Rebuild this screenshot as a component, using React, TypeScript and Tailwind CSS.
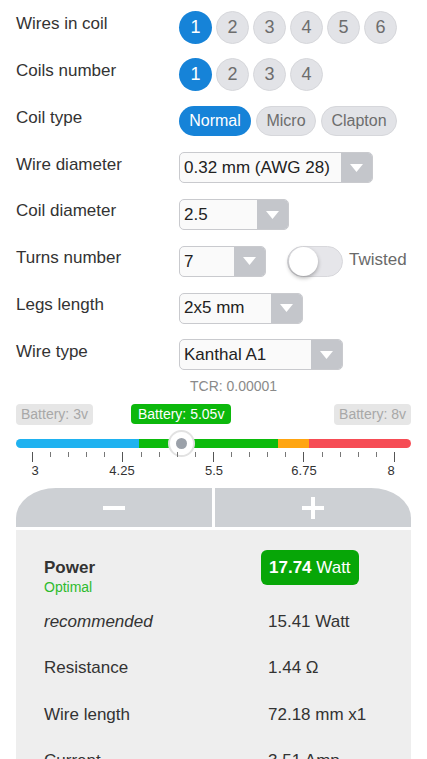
import { useState } from 'react';

const font = { fontFamily: '"Liberation Sans", Arial, sans-serif' };

function Row({ label, children }: { label: string; children: React.ReactNode }) {
    return (
        <div className="flex h-[46.8px] items-center">
            <div className="w-[179px] shrink-0 pb-[7px] pl-4 text-[17px] text-[#333]">{label}</div>
            <div className="flex items-center">{children}</div>
        </div>
    );
}

function Circles({ count, active }: { count: number; active: number }) {
    return (
        <div className="flex gap-1">
            {Array.from({ length: count }, (_, i) => i + 1).map((n) => (
                <div
                    key={n}
                    className={
                        n === active
                            ? 'flex h-[33px] w-[33px] items-center justify-center rounded-full bg-[#1683d8] text-[18px] text-white'
                            : 'flex h-[33px] w-[33px] items-center justify-center rounded-full border border-[#d6d7db] bg-[#e2e3e7] text-[18px] text-[#6d6d6d]'
                    }
                >
                    {n}
                </div>
            ))}
        </div>
    );
}

function Select({ value, width }: { value: string; width: number }) {
    return (
        <div
            className="flex h-[31px] overflow-hidden rounded-[5px] border border-[#c9cace] bg-[#fafafa]"
            style={{ width }}
        >
            <div className="flex flex-1 items-center pl-[4px] text-[17px] text-[#222]">{value}</div>
            <div className="flex w-[31px] items-center justify-center bg-[#c4c6cb]">
                <svg width="13" height="8" viewBox="0 0 13 8">
                    <path d="M0 0 H13 L6.5 8 Z" fill="#fff" />
                </svg>
            </div>
        </div>
    );
}

export default function App() {
    const [twisted] = useState(false);
    const ticks = Array.from({ length: 21 }, (_, i) => i);

    return (
        <div className="min-h-screen overflow-hidden bg-white" style={font}>
            <div className="pt-1">
                <Row label="Wires in coil">
                    <Circles count={6} active={1} />
                </Row>
                <Row label="Coils number">
                    <Circles count={4} active={1} />
                </Row>
                <Row label="Coil type">
                    <div className="flex gap-[5px] text-[16px]">
                        <div className="flex h-[30px] w-[72px] items-center justify-center rounded-full bg-[#1683d8] text-white">Normal</div>
                        <div className="flex h-[30px] w-[60px] items-center justify-center rounded-full border border-[#d6d7db] bg-[#e2e3e7] text-[#6d6d6d]">Micro</div>
                        <div className="flex h-[30px] w-[76px] items-center justify-center rounded-full border border-[#d6d7db] bg-[#e2e3e7] text-[#6d6d6d]">Clapton</div>
                    </div>
                </Row>
                <Row label="Wire diameter">
                    <Select value="0.32 mm (AWG 28)" width={194} />
                </Row>
                <Row label="Coil diameter">
                    <Select value="2.5" width={110} />
                </Row>
                <Row label="Turns number">
                    <Select value="7" width={87} />
                    <div className="ml-[21px] flex h-[31px] w-[56px] items-center rounded-full border border-[#d8d8dc] bg-[#e6e6ea] px-[1px]">
                        <div
                            className={
                                twisted
                                    ? 'ml-auto h-[29px] w-[29px] rounded-full bg-white'
                                    : 'h-[29px] w-[29px] rounded-full bg-white shadow-[0_2px_4px_rgba(0,0,0,0.3)]'
                            }
                        />
                    </div>
                    <span className="ml-[6px] pb-[4px] text-[17px] text-[#6a6a6a]">Twisted</span>
                </Row>
                <Row label="Legs length">
                    <Select value="2x5 mm" width={124} />
                </Row>
                <Row label="Wire type">
                    <Select value="Kanthal A1" width={164} />
                </Row>
            </div>

            <div className="-mt-[2px] pl-[190px] text-[14px] text-[#8a8a8a]">TCR: 0.00001</div>

            {/* battery range */}
            <div className="relative mx-4 mt-[7px] h-[22px]">
                <div className="absolute left-0 top-0 flex h-[21px] items-center rounded-[4px] bg-[#e6e6e6] px-[5px] text-[14px] text-[#a8a8a8]">Battery: 3v</div>
                <div className="absolute left-[115px] top-0 flex h-[20px] items-center rounded-[4px] bg-[#0cb80c] px-[7px] text-[14px] text-white">Battery: 5.05v</div>
                <div className="absolute right-0 top-0 flex h-[21px] items-center rounded-[4px] bg-[#e6e6e6] px-[5px] text-[14px] text-[#a8a8a8]">Battery: 8v</div>
            </div>

            <div className="relative mx-4 mt-[13px] h-[9px]">
                <div className="flex h-[9px] overflow-hidden rounded-full">
                    <div className="w-[123px] bg-[#1fb2f0]" />
                    <div className="w-[139px] bg-[#0cbb0c]" />
                    <div className="w-[31px] bg-[#ffa511]" />
                    <div className="flex-1 bg-[#f64c55]" />
                </div>
                <div className="absolute left-[152px] top-[-9px] flex h-[27px] w-[27px] items-center justify-center rounded-full border-2 border-[#e2e2e2] bg-white">
                    <div className="h-[11px] w-[11px] rounded-full bg-[#9ba1a9]" />
                </div>
            </div>

            <div className="relative mx-4 mt-[4px] h-[26px]">
                <div className="flex justify-between px-[16px]">
                    {ticks.map((t) => (
                        <div key={t} className={t % 5 === 0 ? 'h-[10px] w-px bg-[#555]' : 'h-[5px] w-px bg-[#777]'} />
                    ))}
                </div>
                <div className="absolute left-[7px] top-[9px] w-[24px] text-center text-[13px] text-[#333]">3</div>
                <div className="absolute left-[88px] top-[9px] w-[36px] text-center text-[13px] text-[#333]">4.25</div>
                <div className="absolute left-[180px] top-[9px] w-[36px] text-center text-[13px] text-[#333]">5.5</div>
                <div className="absolute left-[270px] top-[9px] w-[36px] text-center text-[13px] text-[#333]">6.75</div>
                <div className="absolute left-[363px] top-[9px] w-[24px] text-center text-[13px] text-[#333]">8</div>
            </div>

            {/* +/- buttons */}
            <div className="mx-4 mt-[10px] flex h-[39px] gap-[3px]">
                <div className="flex flex-1 items-center justify-center rounded-tl-[40px_30px] bg-[#cdd0d4]">
                    <div className="h-[4px] w-[22px] bg-white" />
                </div>
                <div className="flex flex-1 items-center justify-center rounded-tr-[40px_30px] bg-[#cdd0d4]">
                    <div className="relative h-[22px] w-[22px]">
                        <div className="absolute left-0 top-[9px] h-[4px] w-[22px] bg-white" />
                        <div className="absolute left-[9px] top-0 h-[22px] w-[4px] bg-white" />
                    </div>
                </div>
            </div>

            {/* results */}
            <div className="mx-4 mt-[3px] bg-[#eeeeee] pl-[28px] pt-[20px] pb-6 text-[17px] text-[#333]">
                <div className="flex">
                    <div className="w-[224px] pt-[8px]">
                        <div className="h-[20px] font-bold leading-[20px]">Power</div>
                        <div className="h-[18px] text-[14px] leading-[18px] text-[#2dbb2d]">Optimal</div>
                    </div>
                    <div className="-ml-[7px] flex h-[35px] items-center rounded-[6px] bg-[#07a607] px-[8px] text-white">
                        <span className="font-bold">17.74</span>&nbsp;Watt
                    </div>
                </div>
                <div className="mt-[2px] flex h-[46.5px] items-center">
                    <div className="w-[224px] italic">recommended</div>
                    <div>15.41 Watt</div>
                </div>
                <div className="flex h-[46.5px] items-center">
                    <div className="w-[224px]">Resistance</div>
                    <div>1.44 Ω</div>
                </div>
                <div className="flex h-[46.5px] items-center">
                    <div className="w-[224px]">Wire length</div>
                    <div>72.18 mm x1</div>
                </div>
                <div className="flex h-[46.5px] items-center">
                    <div className="w-[224px]">Current</div>
                    <div>3.51 Amp</div>
                </div>
            </div>
        </div>
    );
}
